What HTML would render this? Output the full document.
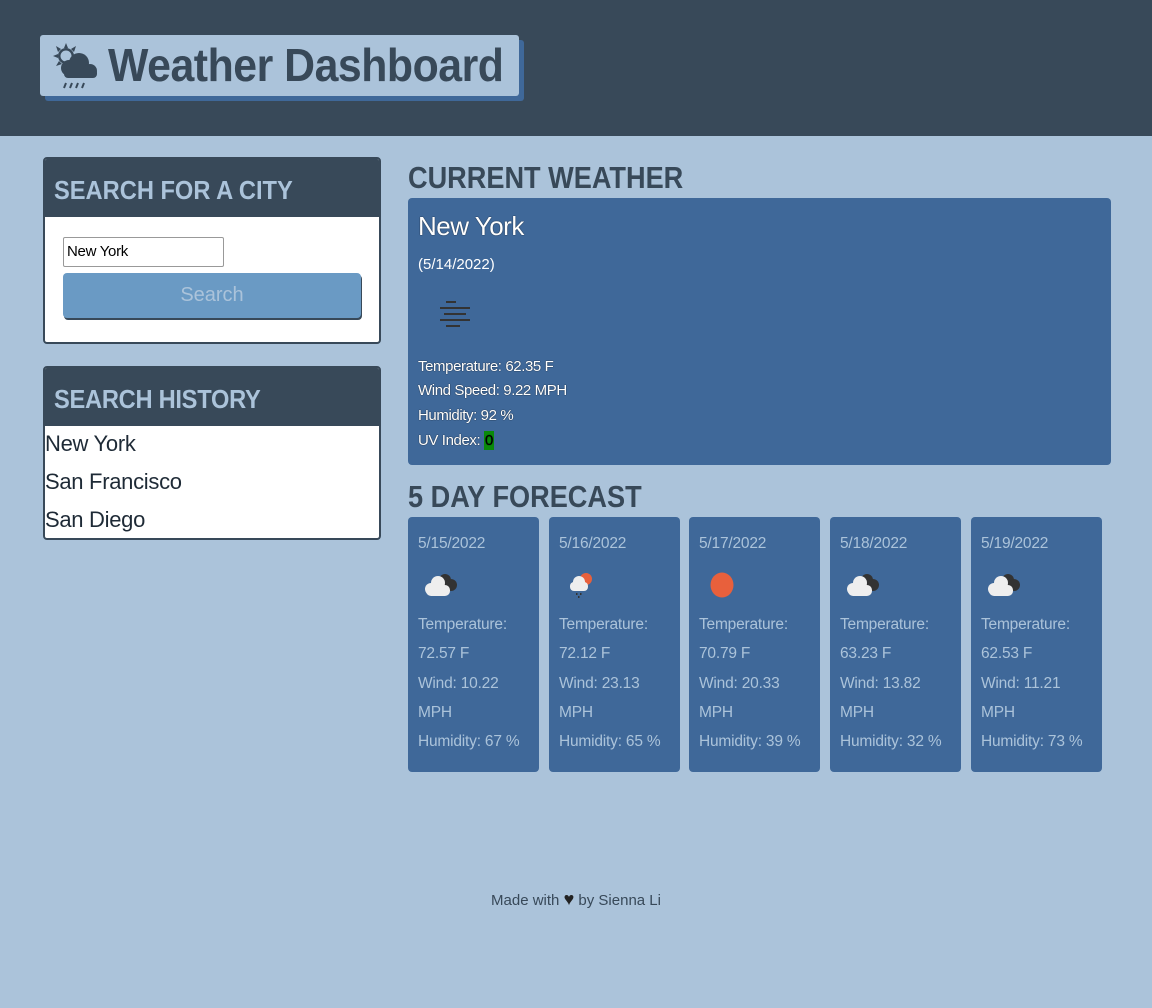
<!DOCTYPE html>
<html><head><style>
*{margin:0;padding:0;box-sizing:border-box}
body{width:1152px;height:1008px;background:#abc3da;font-family:"Liberation Sans",sans-serif;position:relative;overflow:hidden}
.hdr{position:absolute;left:0;top:0;width:1152px;height:136px;background:#384959}
.title{position:absolute;left:40px;top:35px;width:479px;height:61px;background:#abc3da;border-radius:3px;box-shadow:5px 5px 0 #3f6899;color:#384959}
.title span{position:absolute;left:68px;top:0;font-weight:bold;font-size:46px;line-height:61px;white-space:nowrap;letter-spacing:-0.5px;transform:scaleX(0.93);transform-origin:left}
.card{position:absolute;left:43px;width:338px;background:#fff;border:2px solid #384959;border-radius:4px;overflow:hidden}
.card .h{background:#384959;height:58px;color:#abc3da;font-weight:bold;font-size:26px;line-height:62px;padding-left:9px;white-space:nowrap}
.card .h span{display:inline-block;transform:scaleX(0.91);transform-origin:left}
.input{position:absolute;left:18px;top:78px;width:161px;height:30px;border:1px solid #999;border-radius:2px;font-size:15px;line-height:28px;padding-left:3px;color:#000;letter-spacing:-0.3px}
.btn{position:absolute;left:18px;top:114px;width:298px;height:45px;background:#6a9ac4;border-radius:4px;box-shadow:1px 2px 0 #384959;color:#abc3da;font-size:20px;text-align:center;line-height:44px}
.hist div{font-size:22px;color:#1e2a36;height:38px;line-height:28px;padding-left:0;letter-spacing:-0.3px}
.sec{position:absolute;left:408px;color:#384959;font-weight:bold;font-size:31px;white-space:nowrap;transform:scaleX(0.875);transform-origin:left}
.cur{position:absolute;left:408px;top:198px;width:703px;height:267px;background:#3f6899;border-radius:4px;color:#fff;padding-left:10px}
.cur .l{position:absolute;left:10px;font-size:15px;text-shadow:0 0 1px #000;letter-spacing:-0.4px}
.fc{position:absolute;top:517px;width:131px;height:255px;background:#3f6899;border-radius:4px;color:#abc3da;font-size:15.5px;letter-spacing:-0.2px}
.fc div{position:absolute;left:10px;white-space:nowrap}
</style></head><body>
<div class="hdr"></div>
<div class="title">
<svg style="position:absolute;left:10px;top:6px" width="50" height="50" viewBox="0 0 50 50">
<g fill="#384959"><circle cx="16" cy="15" r="8"/><path d="M16 2l2 5h-4zM3 15l5-2v4zM6 5l5 3-3 3zM26 5l-5 3 3 3zM6 25l3-5 3 3z"/></g>
<circle cx="16" cy="15" r="5.5" fill="#abc3da"/>
<g fill="#384959"><circle cx="19" cy="27" r="8"/><circle cx="29" cy="22" r="10"/><circle cx="40" cy="30" r="7"/><rect x="14" y="28" width="33" height="9" rx="4"/></g>
<path d="M16 42l-2 5M22 42l-2 5M28 42l-2 5M34 42l-2 5" stroke="#384959" stroke-width="2"/>
</svg><span>Weather Dashboard</span></div>

<div class="card" style="top:157px;height:187px"><div class="h"><span>SEARCH FOR A CITY</span></div>
<div class="input">New York</div><div class="btn">Search</div></div>

<div class="card hist" style="top:366px;height:174px"><div class="h"><span>SEARCH HISTORY</span></div>
<div style="height:4px"></div><div>New York</div><div>San Francisco</div><div>San Diego</div></div>

<div class="sec" style="top:160px">CURRENT WEATHER</div>
<div class="cur">
<div style="position:absolute;left:10px;top:13px;font-size:26px;text-shadow:0 0 1px #000;letter-spacing:-0.5px">New York</div>
<div style="position:absolute;left:10px;top:58px;font-size:15px">(5/14/2022)</div>
<svg style="position:absolute;left:26px;top:102px" width="40" height="32"><g stroke="#333" stroke-width="2"><path d="M12 2h10M6 8h30M10 14h22M6 20h30M12 26h14"/></g></svg>
<div class="l" style="top:160px">Temperature: 62.35 F</div>
<div class="l" style="top:184px">Wind Speed: 9.22 MPH</div>
<div class="l" style="top:209px">Humidity: 92 %</div>
<div class="l" style="top:234px">UV Index: <span style="background:#0a8a0a;color:#000;padding:1px 1px">0</span></div>
</div>

<div class="sec" style="top:479px">5 DAY FORECAST</div>

<div class="fc" style="left:408px"><div style="top:18px">5/15/2022</div>
<svg style="position:absolute;left:16px;top:55px" width="36" height="26"><g fill="#333"><circle cx="21" cy="8" r="6"/><circle cx="27" cy="13" r="6"/></g><g fill="#eee"><circle cx="14" cy="11" r="7"/><circle cx="7" cy="17" r="6"/><rect x="2" y="13" width="24" height="11" rx="5"/></g></svg>
<div style="top:99px">Temperature:</div><div style="top:128px">72.57 F</div><div style="top:158px">Wind: 10.22</div><div style="top:187px">MPH</div><div style="top:216px">Humidity: 67 %</div></div>

<div class="fc" style="left:549px"><div style="top:18px">5/16/2022</div>
<svg style="position:absolute;left:18px;top:55px" width="30" height="30"><circle cx="19" cy="7" r="6" fill="#e8603c"/><g fill="#eee"><circle cx="12" cy="10" r="6"/><rect x="3" y="10" width="18" height="9" rx="4"/></g><g fill="#333"><rect x="9" y="21" width="1.5" height="2"/><rect x="13" y="21" width="1.5" height="2"/><rect x="11" y="24" width="1.5" height="2"/></g></svg>
<div style="top:99px">Temperature:</div><div style="top:128px">72.12 F</div><div style="top:158px">Wind: 23.13</div><div style="top:187px">MPH</div><div style="top:216px">Humidity: 65 %</div></div>

<div class="fc" style="left:689px"><div style="top:18px">5/17/2022</div>
<svg style="position:absolute;left:20px;top:54px" width="26" height="28"><ellipse cx="13" cy="14" rx="11.5" ry="12.5" fill="#e8603c"/></svg>
<div style="top:99px">Temperature:</div><div style="top:128px">70.79 F</div><div style="top:158px">Wind: 20.33</div><div style="top:187px">MPH</div><div style="top:216px">Humidity: 39 %</div></div>

<div class="fc" style="left:830px"><div style="top:18px">5/18/2022</div>
<svg style="position:absolute;left:16px;top:55px" width="36" height="26"><g fill="#333"><circle cx="21" cy="8" r="6"/><circle cx="27" cy="13" r="6"/></g><g fill="#eee"><circle cx="14" cy="11" r="7"/><circle cx="7" cy="17" r="6"/><rect x="2" y="13" width="24" height="11" rx="5"/></g></svg>
<div style="top:99px">Temperature:</div><div style="top:128px">63.23 F</div><div style="top:158px">Wind: 13.82</div><div style="top:187px">MPH</div><div style="top:216px">Humidity: 32 %</div></div>

<div class="fc" style="left:971px"><div style="top:18px">5/19/2022</div>
<svg style="position:absolute;left:16px;top:55px" width="36" height="26"><g fill="#333"><circle cx="21" cy="8" r="6"/><circle cx="27" cy="13" r="6"/></g><g fill="#eee"><circle cx="14" cy="11" r="7"/><circle cx="7" cy="17" r="6"/><rect x="2" y="13" width="24" height="11" rx="5"/></g></svg>
<div style="top:99px">Temperature:</div><div style="top:128px">62.53 F</div><div style="top:158px">Wind: 11.21</div><div style="top:187px">MPH</div><div style="top:216px">Humidity: 73 %</div></div>

<div style="position:absolute;left:0;width:1152px;top:889px;text-align:center;font-size:15px;color:#384959">Made with <span style="color:#222;font-size:18px">&#9829;</span> by Sienna Li</div>
</body></html>
